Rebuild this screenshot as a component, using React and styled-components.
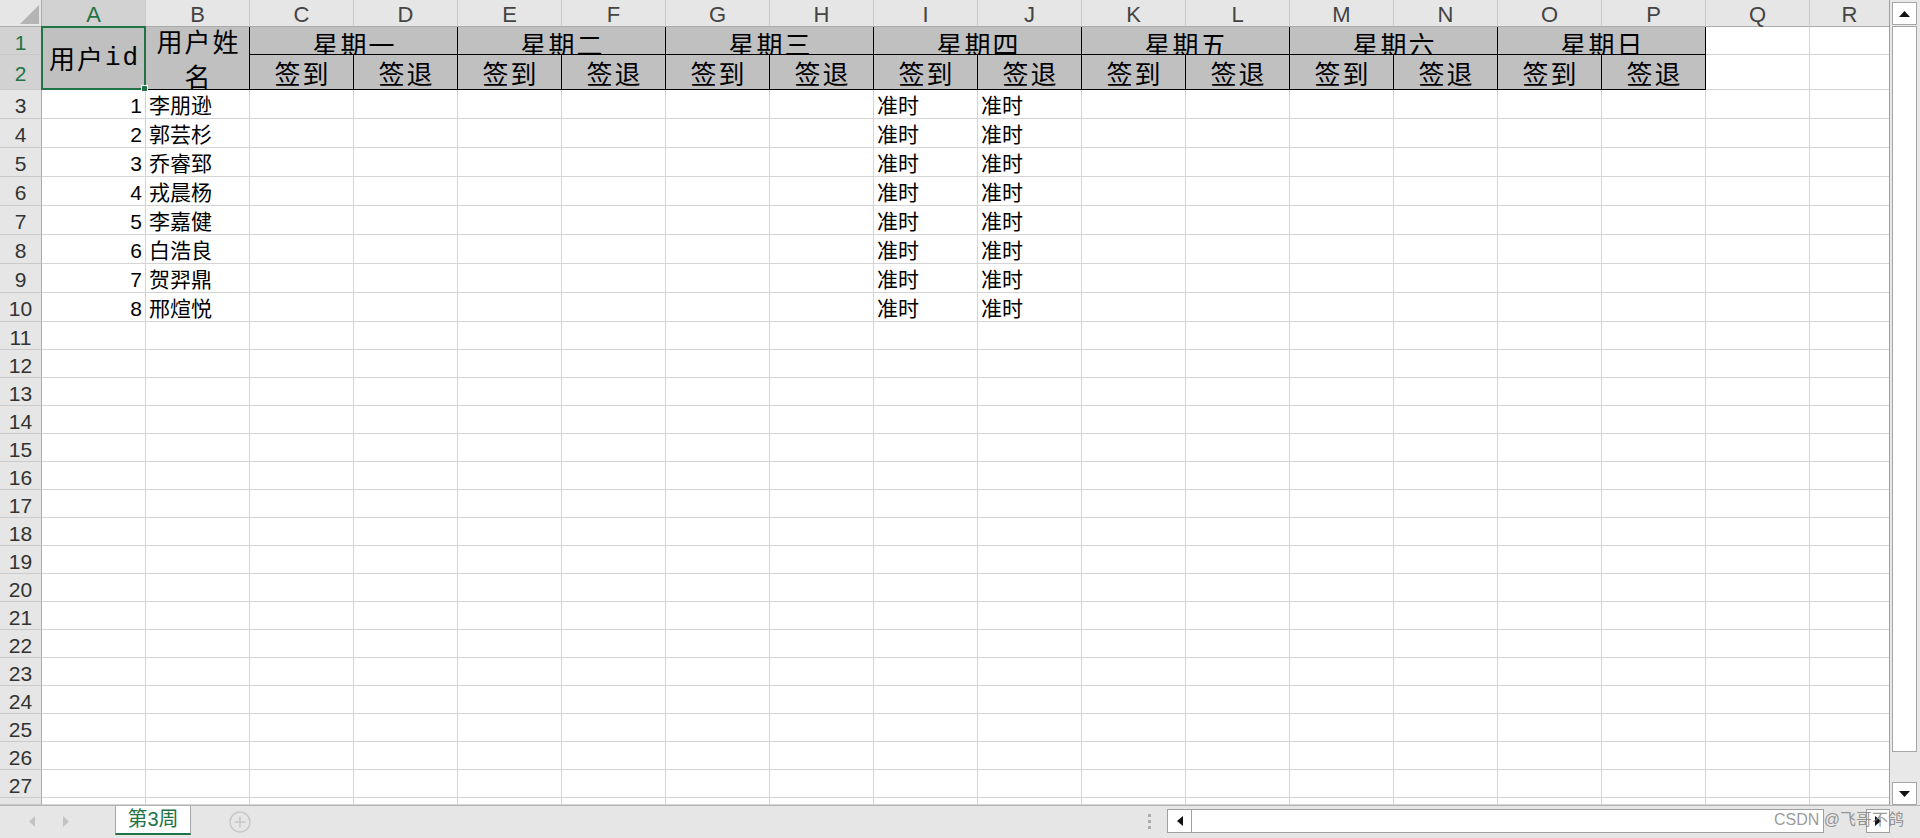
import React from 'react';
import styled, { createGlobalStyle } from 'styled-components';

const GREEN = '#217346';
const GRID = '#d4d4d4';

const COLUMNS = 'ABCDEFGHIJKLMNOPQR'.split('');
const DAYS = ['星期一', '星期二', '星期三', '星期四', '星期五', '星期六', '星期日'];
const USERS = [
  { id: 1, name: '李朋逊' },
  { id: 2, name: '郭芸杉' },
  { id: 3, name: '乔睿郅' },
  { id: 4, name: '戎晨杨' },
  { id: 5, name: '李嘉健' },
  { id: 6, name: '白浩良' },
  { id: 7, name: '贺羿鼎' },
  { id: 8, name: '邢煊悦' },
];
// rows 11..27 are empty, row 28 only peeks out under the tab bar
const EMPTY_ROWS = Array.from({ length: 17 }, (_, i) => i + 11);

const GlobalStyle = createGlobalStyle`
  *, *::before, *::after { box-sizing: border-box; }
  html, body {
    margin: 0;
    padding: 0;
    background: #fff;
    overflow: hidden;
  }
  body {
    font-family: "Liberation Sans", "Noto Sans CJK SC", sans-serif;
  }
`;

function App() {
  return (
    <Page>
      <GlobalStyle />
      <Body>
        <Sheet>
          <Grid>
            <Corner>
              <svg width="19" height="19" viewBox="0 0 19 19">
                <polygon points="19,0 19,19 0,19" fill="#b4b4b4" />
              </svg>
            </Corner>
            {COLUMNS.map((c) => (
              <ColHead key={c} $active={c === 'A'}>{c}</ColHead>
            ))}

            {/* row 1 */}
            <RowHead $active>1</RowHead>
            <SelectedHead $rows={2}>
              用户<Latin>id</Latin>
              <Selection>
                <FillHandle />
              </Selection>
            </SelectedHead>
            <HeadCell $rows={2} $clip>
              <WrapLabel>用户姓名</WrapLabel>
            </HeadCell>
            {DAYS.map((d) => (
              <HeadCell key={d} $cols={2} $top={4} $clip>{d}</HeadCell>
            ))}
            <Cell />
            <Cell />

            {/* row 2 */}
            <RowHead $active>2</RowHead>
            {DAYS.map((d) => (
              <React.Fragment key={d}>
                <HeadCell $top={5} $clip>签到</HeadCell>
                <HeadCell $top={5} $clip>签退</HeadCell>
              </React.Fragment>
            ))}
            <Cell />
            <Cell />

            {USERS.map((u, i) => (
              <React.Fragment key={u.id}>
                <RowHead>{i + 3}</RowHead>
                {COLUMNS.map((c) => {
                  if (c === 'A') return <Cell key={c} $align="right">{u.id}</Cell>;
                  if (c === 'B') return <Cell key={c}>{u.name}</Cell>;
                  if (c === 'I' || c === 'J') return <Cell key={c}>准时</Cell>;
                  return <Cell key={c} />;
                })}
              </React.Fragment>
            ))}

            {EMPTY_ROWS.map((r) => (
              <React.Fragment key={r}>
                <RowHead>{r}</RowHead>
                {COLUMNS.map((c) => <Cell key={c} />)}
              </React.Fragment>
            ))}

            <RowHead />
            {COLUMNS.map((c) => <Cell key={c} />)}
          </Grid>
        </Sheet>

        <VScroll>
          <ScrollBtn $h={23}>
            <svg width="11" height="6" viewBox="0 0 11 6"><polygon points="0,6 11,6 5.5,0" fill="#111" /></svg>
          </ScrollBtn>
          <VThumb />
          <Grow />
          <ScrollBtn $h={23}>
            <svg width="11" height="6" viewBox="0 0 11 6"><polygon points="0,0 11,0 5.5,6" fill="#111" /></svg>
          </ScrollBtn>
        </VScroll>
      </Body>

      <TabBar>
        <NavGroup>
          <svg width="6" height="11" viewBox="0 0 6 11"><polygon points="6,0 6,11 0,5.5" fill="#c3c3c3" /></svg>
          <svg width="6" height="11" viewBox="0 0 6 11"><polygon points="0,0 0,11 6,5.5" fill="#c3c3c3" /></svg>
        </NavGroup>
        <SheetTab>第3周</SheetTab>
        <AddSheet>
          <svg width="22" height="22" viewBox="0 0 22 22">
            <circle cx="11" cy="11" r="10" fill="none" stroke="#c8c8c8" strokeWidth="1.5" />
            <path d="M11 5.5v11M5.5 11h11" stroke="#c8c8c8" strokeWidth="1.6" />
          </svg>
        </AddSheet>
        <Grow />
        <Dots>
          <Dot />
          <Dot />
          <Dot />
        </Dots>
        <HScroll>
          <HButton $w={25}>
            <svg width="6" height="10" viewBox="0 0 6 10"><polygon points="6,0 6,10 0,5" fill="#111" /></svg>
          </HButton>
          <HThumb />
          <Grow />
          <HButton $w={24}>
            <svg width="6" height="10" viewBox="0 0 6 10"><polygon points="0,0 0,10 6,5" fill="#111" /></svg>
          </HButton>
        </HScroll>
        <ScrollCorner />
      </TabBar>

      <Watermark>CSDN @飞哥不鸽</Watermark>
    </Page>
  );
}

const Page = styled.div`
  position: relative;
  width: 1920px;
  height: 838px;
  display: flex;
  flex-direction: column;
  overflow: hidden;
  background: #fff;
`;

const Body = styled.div`
  display: flex;
  height: 805px;
`;

const Sheet = styled.div`
  width: 1889px;
  height: 805px;
  overflow: hidden;
`;

const Grid = styled.div`
  display: grid;
  width: 1890px;
  grid-template-columns: 42px repeat(17, 104px) 80px;
  grid-template-rows: 27px 28px 35px repeat(8, 29px) repeat(17, 28px) 7px;
`;

const Corner = styled.div`
  display: flex;
  align-items: flex-end;
  justify-content: flex-end;
  padding: 0 2px 2px 0;
  background: #e6e6e6;
  border-right: 1px solid #ababab;
  border-bottom: 1px solid #ababab;
`;

const ColHead = styled.div`
  display: flex;
  align-items: center;
  justify-content: center;
  padding-top: 4px;
  background: ${(p) => (p.$active ? '#d2d2d2' : '#e6e6e6')};
  color: ${(p) => (p.$active ? GREEN : '#444')};
  border-right: 1px solid #cacaca;
  border-bottom: 1px solid #ababab;
  font-size: 22px;
  line-height: 1;
`;

const RowHead = styled.div`
  display: flex;
  align-items: center;
  justify-content: center;
  padding-top: 3px;
  background: ${(p) => (p.$active ? '#d2d2d2' : '#e6e6e6')};
  color: ${(p) => (p.$active ? GREEN : '#333')};
  border-right: 1px solid #ababab;
  border-bottom: 1px solid #cacaca;
  font-size: 21px;
  line-height: 1;
  overflow: hidden;
`;

const Cell = styled.div`
  display: flex;
  align-items: flex-start;
  justify-content: ${(p) => (p.$align === 'right' ? 'flex-end' : 'flex-start')};
  padding: 5px 3px 0 3px;
  border-right: 1px solid ${GRID};
  border-bottom: 1px solid ${GRID};
  font-size: 21px;
  line-height: 1;
  color: #000;
  white-space: nowrap;
  overflow: hidden;
`;

const HeadCell = styled.div`
  grid-column: span ${(p) => p.$cols || 1};
  grid-row: span ${(p) => p.$rows || 1};
  display: flex;
  justify-content: center;
  align-items: ${(p) => (p.$top !== undefined ? 'flex-start' : 'center')};
  padding: ${(p) => p.$top || 0}px 0 0 2px;
  background: #c0c0c0;
  border-right: 1px solid #000;
  border-bottom: 1px solid #000;
  font-family: "Noto Sans CJK SC", sans-serif;
  font-size: 26px;
  letter-spacing: 2px;
  line-height: 1;
  text-align: center;
  color: #000;
  white-space: nowrap;
  overflow: ${(p) => (p.$clip ? 'hidden' : 'visible')};
`;

const SelectedHead = styled(HeadCell)`
  position: relative;
`;

const Latin = styled.span`
  font-family: "Liberation Mono", monospace;
`;

const WrapLabel = styled.span`
  display: block;
  width: 100%;
  white-space: normal;
  line-height: 35px;
`;

const Selection = styled.div`
  position: absolute;
  top: -1px;
  left: -1px;
  right: -1px;
  bottom: -1px;
  border: 2px solid ${GREEN};
  z-index: 2;
  pointer-events: none;
`;

const FillHandle = styled.div`
  position: absolute;
  right: -4px;
  bottom: -4px;
  width: 7px;
  height: 7px;
  background: ${GREEN};
  border: 1px solid #fff;
`;

const VScroll = styled.div`
  width: 31px;
  height: 805px;
  display: flex;
  flex-direction: column;
  padding: 2px 3px 0 2px;
  background: #e8e8e8;
  border-left: 1px solid #a0a0a0;
`;

const ScrollBtn = styled.div`
  height: ${(p) => p.$h}px;
  flex-shrink: 0;
  display: flex;
  align-items: center;
  justify-content: center;
  background: #fff;
  border: 1px solid #a6a6a6;
`;

const VThumb = styled.div`
  height: 726px;
  margin-top: 1px;
  flex-shrink: 0;
  background: #fff;
  border: 1px solid #a6a6a6;
`;

const Grow = styled.div`
  flex: 1;
`;

const TabBar = styled.div`
  display: flex;
  align-items: flex-start;
  height: 33px;
  background: #e6e6e6;
  border-top: 1px solid #b4b4b4;
`;

const NavGroup = styled.div`
  width: 115px;
  height: 32px;
  display: flex;
  align-items: center;
  gap: 28px;
  padding: 0 0 2px 29px;
`;

const SheetTab = styled.div`
  width: 76px;
  height: 29px;
  display: flex;
  align-items: center;
  justify-content: center;
  padding-bottom: 2px;
  background: #fff;
  border-left: 1px solid #a6a6a6;
  border-right: 1px solid #a6a6a6;
  border-bottom: 2px solid ${GREEN};
  color: ${GREEN};
  font-size: 20px;
  line-height: 1;
`;

const AddSheet = styled.div`
  margin: 5px 0 0 38px;
  width: 22px;
  height: 22px;
  display: flex;
`;

const Dots = styled.div`
  width: 19px;
  display: flex;
  flex-direction: column;
  gap: 3px;
  padding-top: 8px;
`;

const Dot = styled.div`
  width: 3px;
  height: 3px;
  background: #ababab;
`;

const HScroll = styled.div`
  width: 723px;
  height: 24px;
  margin-top: 3px;
  display: flex;
`;

const HButton = styled.div`
  width: ${(p) => p.$w}px;
  display: flex;
  align-items: center;
  justify-content: center;
  background: #fff;
  border: 1px solid #a0a0a0;
`;

const HThumb = styled.div`
  width: 632px;
  background: #fff;
  border: 1px solid #a0a0a0;
  border-left: none;
`;

const ScrollCorner = styled.div`
  width: 30px;
`;

const Watermark = styled.div`
  position: absolute;
  right: 16px;
  top: 809px;
  font-size: 16px;
  line-height: 22px;
  color: rgba(120, 120, 120, 0.75);
  pointer-events: none;
  white-space: nowrap;
`;

export default App;
